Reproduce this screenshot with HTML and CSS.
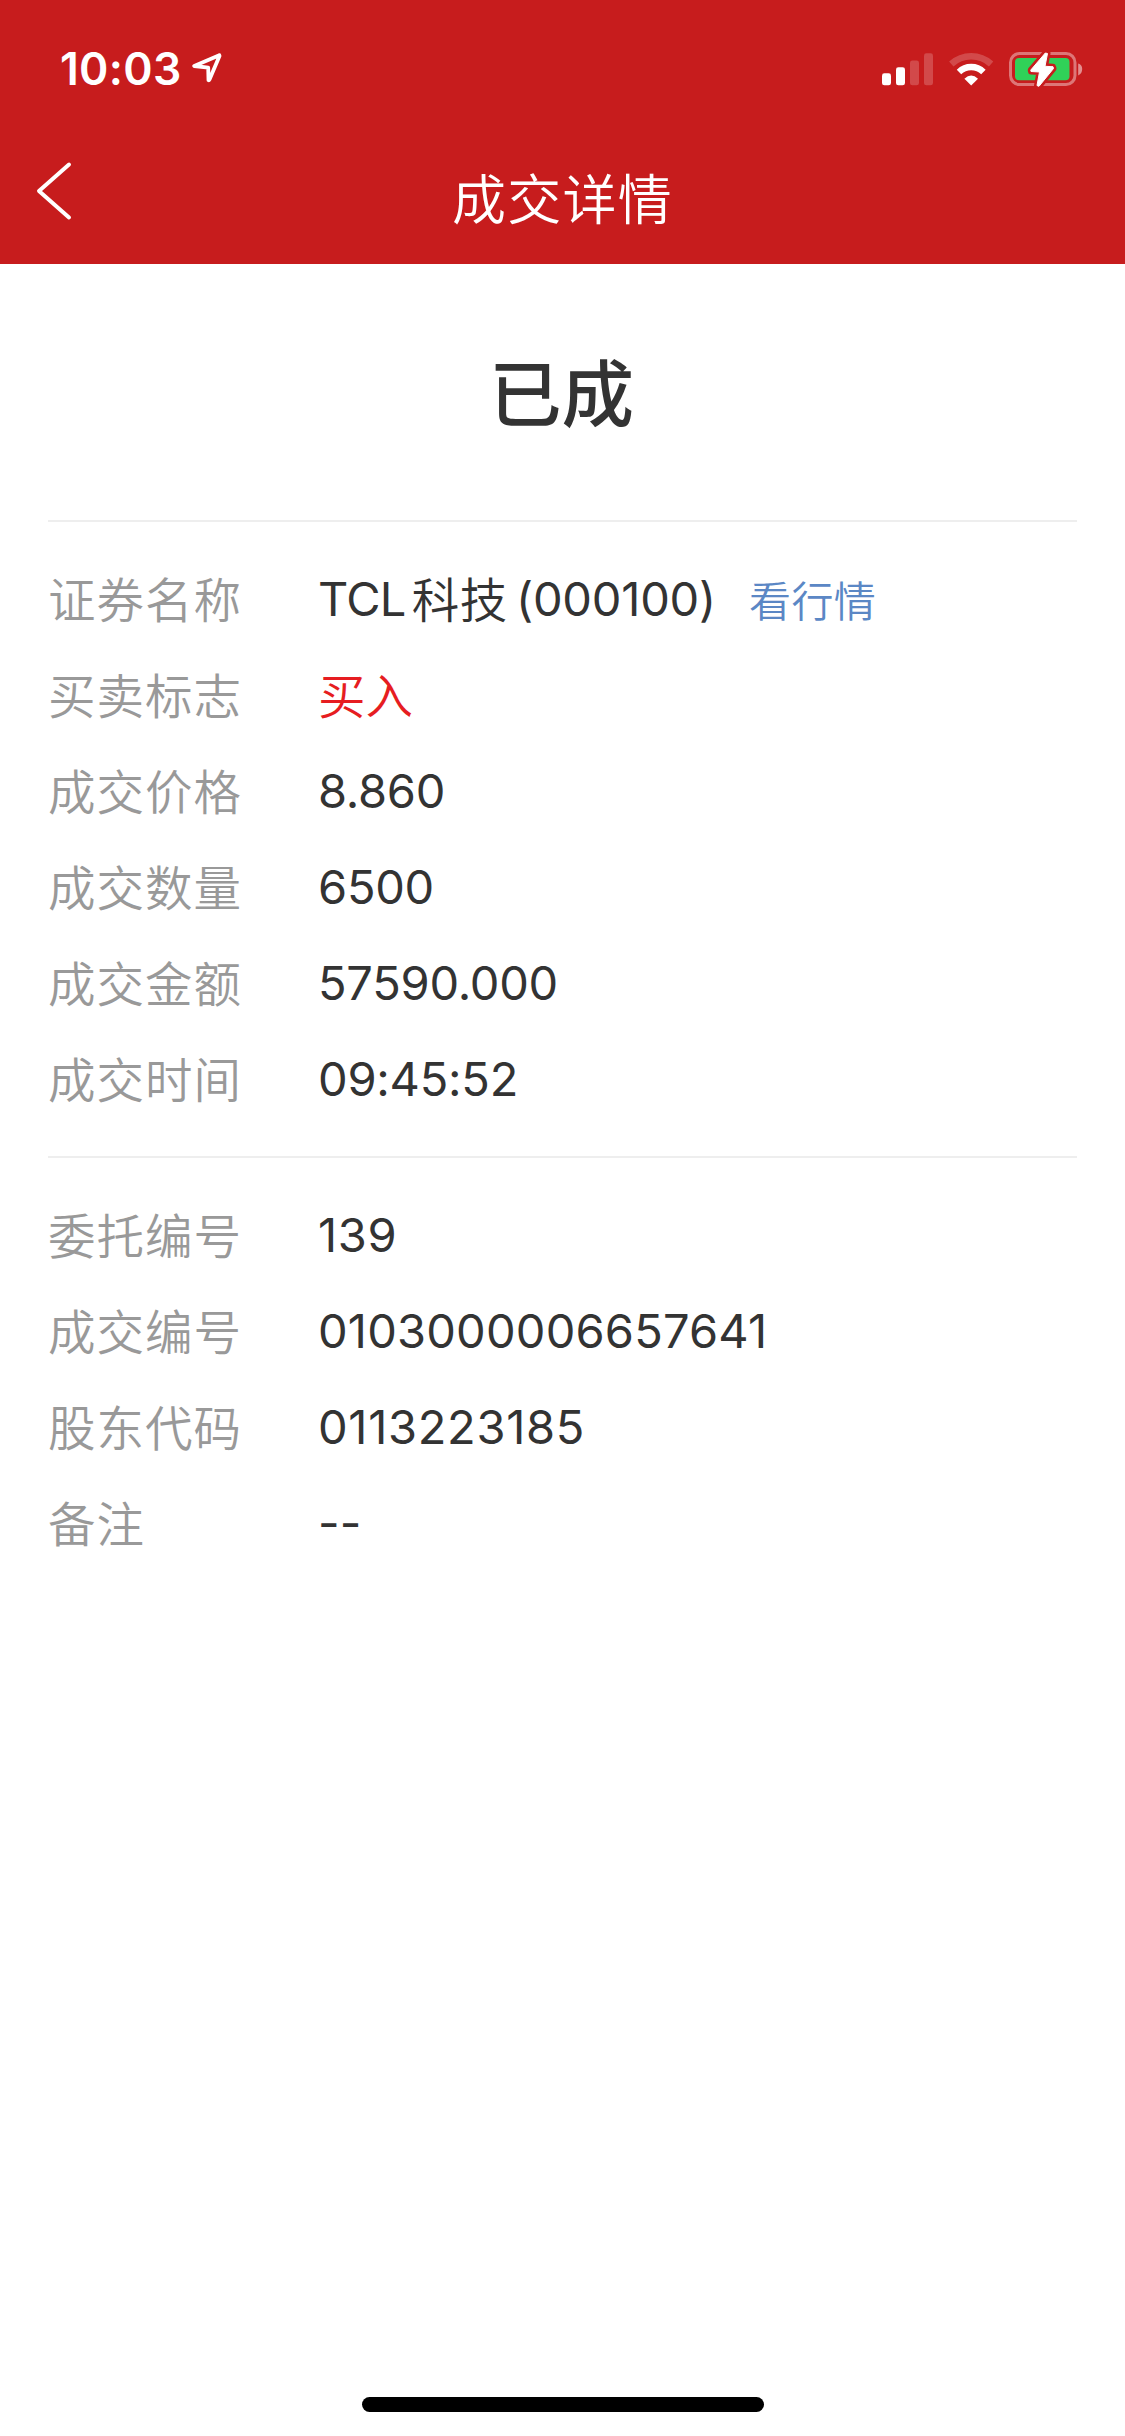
FILE: index.html
```html
<!DOCTYPE html>
<html lang="zh-CN">
<head>
<meta charset="utf-8">
<title>成交详情</title>
<link rel="stylesheet" href="styles.css">
</head>
<body>
<div class="screen">
  <header class="header">
    <div class="status-bar">
      <span class="clock">10:03</span>
      <svg class="location" width="30" height="30" viewBox="0 0 30 30" fill="none" stroke="#fff" stroke-width="3.8" stroke-linejoin="round"><path d="M27.3 2.2 2.2 13 16.2 14.600 16.5 27.200Q17 27.500 17.500 26.500L27.500 3Z"/></svg>
      <svg class="signals" width="202" height="36" viewBox="0 0 202 36">
        <g fill="#fff">
          <rect x="0" y="21.3" width="9" height="12" rx="2.4"/>
          <rect x="14" y="15.2" width="9" height="18.1" rx="2.4"/>
          <rect x="28" y="8.4" width="9" height="24.9" rx="2.4" opacity=".2"/>
          <rect x="42" y="1.3" width="9" height="32" rx="2.4" opacity=".2"/>
        </g>
        <path d="M69.300 12A29.500 29.500 0 0 1 109.100 12" fill="none" stroke="#fff" stroke-width="6.500" opacity=".2"/>
        <path d="M77 20A17.500 17.500 0 0 1 101.400 20" fill="none" stroke="#fff" stroke-width="6.400"/>
        <path d="M82.400 26.800Q89.200 20.200 96 26.800L89.200 33.600Z" fill="#fff"/>
        <rect x="128.500" y="1.500" width="64.500" height="31" rx="9" fill="none" stroke="#fff" stroke-width="3" opacity=".4"/>
        <rect x="133" y="6" width="54.500" height="22.300" rx="4" fill="#30d158"/>
        <path d="M196.200 11.500Q200.200 12.500 200.200 17T196.200 23.500Z" fill="#fff" opacity=".5"/>
        <path d="M163.300 1 148.800 18 149 19.500 157.500 20 155 33.500 157 34.300 171.500 16.500 171 14.700 163 14.300 165.500 1.500Z" fill="#fff" stroke="#c71c1d" stroke-width="6" stroke-linejoin="round"/>
        <path d="M163.300 1 148.800 18 149 19.500 157.500 20 155 33.500 157 34.300 171.500 16.500 171 14.700 163 14.300 165.500 1.500Z" fill="#fff" stroke="#fff" stroke-width="1" stroke-linejoin="round"/>
      </svg>
    </div>
    <nav class="nav-bar">
      <svg class="back" width="36" height="60" viewBox="0 0 36 60" fill="none" stroke="#fff" stroke-width="4" stroke-linecap="round" stroke-linejoin="round"><path d="M33 3.500 3 30 33 56.500"/></svg>
      <h1 class="title">成交详情</h1>
    </nav>
  </header>
  <main class="content">
    <h2 class="state">已成</h2>
    <dl class="group">
      <div class="row"><dt>证券名称</dt><dd><span class="ticker">TCL</span><span class="cjk stock">科技</span><span class="code">(000100)</span><a class="quote cjk">看行情</a></dd></div>
      <div class="row"><dt>买卖标志</dt><dd><span class="buy cjk">买入</span></dd></div>
      <div class="row"><dt>成交价格</dt><dd>8.860</dd></div>
      <div class="row"><dt>成交数量</dt><dd>6500</dd></div>
      <div class="row"><dt>成交金额</dt><dd>57590.000</dd></div>
      <div class="row"><dt>成交时间</dt><dd>09:45:52</dd></div>
    </dl>
    <dl class="group serials">
      <div class="row"><dt>委托编号</dt><dd class="loose">139</dd></div>
      <div class="row"><dt>成交编号</dt><dd>0103000006657641</dd></div>
      <div class="row"><dt>股东代码</dt><dd class="loose">0113223185</dd></div>
      <div class="row"><dt>备注</dt><dd>--</dd></div>
    </dl>
  </main>
  <div class="home-indicator"></div>
</div>
</body>
</html>
```
FILE: styles.css
```css
* { box-sizing: border-box; margin: 0; padding: 0; }

body {
  background: #fff;
  color: #333;
  font-family: "Inter", "Noto Sans CJK SC", sans-serif;
}

.screen {
  display: flex;
  flex-direction: column;
  width: 1125px;
  height: 2436px;
}

.header { height: 264px; background: #c71c1d; color: #fff; }

.status-bar {
  display: flex;
  align-items: center;
  height: 132px;
  padding: 6px 41px 0 60px;
}

.clock { width: 132px; font-size: 44.5px; font-weight: 600; line-height: 60px; letter-spacing: .3px; }
.location { margin-top: -3px; }
.signals { margin-left: auto; margin-top: 1px; }

.nav-bar {
  display: grid;
  grid-template-columns: 90px 1fr 90px;
  align-items: center;
  height: 132px;
  padding: 0 36px;
}

.back { margin-top: -14px; }

.title {
  padding-top: 5px;
  font-size: 54px;
  font-weight: 350;
  line-height: 80px;
  letter-spacing: 1.3px;
  text-align: center;
}

.content { flex: 1; padding: 0 48px; }

.state {
  height: 256px;
  padding: 4px 2px 0 0;
  font-size: 72.5px;
  font-weight: 500;
  line-height: 254px;
  text-align: center;
}

.group { padding: 30px 0 28px; border-top: 2px solid #eee; }
.row { display: flex; align-items: center; height: 96px; }

dt, .cjk {
  padding-bottom: 5px;
  font-family: "Noto Sans CJK SC", sans-serif;
  font-size: 47.5px;
  font-weight: 350;
  letter-spacing: 1px;
}

dt { width: 270px; color: #999; }

dd {
  display: flex;
  align-items: center;
  height: 93px;
  margin-bottom: 3px;
  font-size: 47px;
  letter-spacing: -.25px;
}

dd .cjk { padding-bottom: 3px; }

.serials dd { letter-spacing: .2px; }
.serials dd.loose { letter-spacing: .7px; }

.ticker { letter-spacing: -.7px; }
.stock { margin: 0 8px 0 6px; letter-spacing: .6px; }
.code { letter-spacing: -.2px; }
.buy { color: #e61d21; letter-spacing: 0; }
dd .quote { margin-left: 33px; padding-bottom: 1px; color: #5b87c5; font-size: 42px; letter-spacing: .4px; }

.home-indicator {
  align-self: center;
  width: 402px;
  height: 15px;
  margin-bottom: 24px;
  border-radius: 8px;
  background: #000;
}
```
